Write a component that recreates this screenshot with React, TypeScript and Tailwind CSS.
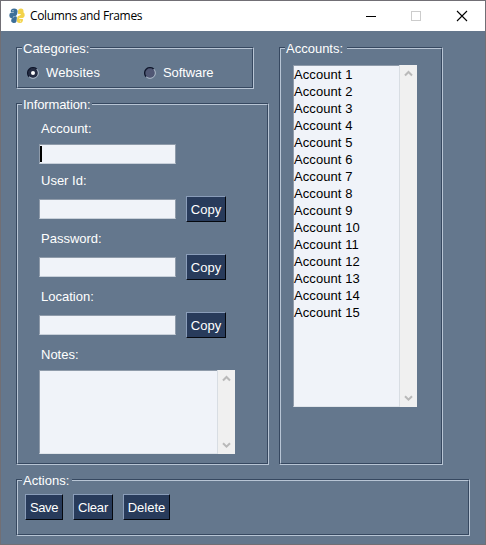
import React from 'react';

const accounts = Array.from({ length: 15 }, (_, i) => `Account ${i + 1}`);

function Frame({ title, className, titleClass, children }: { title: string; className: string; titleClass: string; children: React.ReactNode }) {
  return (
    <section className={`relative shrink-0 border border-t-[#364860] border-l-[#364860] border-r-[#b8c5d5] border-b-[#b8c5d5] ${className}`}>
      <div className="h-full w-full border border-t-[#b8c5d5] border-l-[#b8c5d5] border-r-[#364860] border-b-[#364860]">{children}</div>
      <h2 className={`absolute -top-[7px] left-[5px] h-4 whitespace-nowrap bg-[#64778d] pl-px leading-4 ${titleClass}`}>{title}</h2>
    </section>
  );
}

function Button({ children, className }: { children: string; className: string }) {
  return (
    <button className={`flex h-[26px] shrink-0 items-center justify-center border border-t-[#8a9db9] border-l-[#8a9db9] border-r-[#05080e] border-b-[#05080e] bg-[#283b5b] pt-px text-white ${className}`}>
      {children}
    </button>
  );
}

function Chevron({ down = false }: { down?: boolean }) {
  return (
    <svg width="9" height="7" viewBox="0 0 9 7" fill="none" stroke="#b9b9b9" strokeWidth="2">
      <path d={down ? 'M1 1.2L4.5 4.7L8 1.2' : 'M1 5.5L4.5 2L8 5.5'} />
    </svg>
  );
}

function Scrollbar() {
  return (
    <div className="flex w-[18px] shrink-0 flex-col items-center justify-between border-l border-[#d8dde3] bg-[#f0f0f0] pt-[5px] pb-[5px]">
      <Chevron />
      <Chevron down />
    </div>
  );
}

function Radio({ selected = false }: { selected?: boolean }) {
  return (
    <svg width="12" height="12" viewBox="0 0 12 12" fill="none">
      <circle cx="6" cy="6" r="5" fill={selected ? '#252c43' : '#505774'} />
      <path d="M2.2 9.8A5.3 5.3 0 0 1 9.8 2.2" stroke="#10172c" strokeWidth="1.4" />
      <path d="M2.2 9.8A5.3 5.3 0 0 0 9.8 2.2" stroke="#aebac9" strokeWidth="1" />
      {selected && <circle cx="6" cy="6" r="2" fill="#fff" />}
    </svg>
  );
}

function Field({ label, copy = false }: { label: string; copy?: boolean }) {
  return (
    <div className={copy ? 'h-[58px]' : 'h-[52px]'}>
      <div className="h-4 pl-0.5 leading-4">{label}</div>
      <div className={`mt-[7px] flex items-center gap-2.5 ${copy ? 'h-[26px]' : 'h-5'}`}>
        <div className="h-5 w-[137px] border border-[#8f9baa] border-b-[#c8d0da] bg-[#f0f3f9]">
          {!copy && <div className="h-4 w-0.5 translate-y-px bg-black" />}
        </div>
        {copy && <Button className="w-10">Copy</Button>}
      </div>
    </div>
  );
}

export default function App() {
  return (
    <div className="flex h-[545px] w-[486px] flex-col overflow-hidden border border-[#716f75] bg-[#64778d] font-['Liberation_Sans',Arial,sans-serif] text-[13px] text-white">
      <header className="flex h-[30px] shrink-0 items-center bg-white pl-2 text-black">
        <svg width="16" height="16" viewBox="0 0 16 16" className="shrink-0">
          <path fill="#3d6f98" d="M1.8 2.6Q2.3.5 5 .5Q8.6.6 8.6 3.4L8.1 6.3Q7.6 8.2 5.2 8.3Q3.8 8.5 3.7 10.3H2.2Q.2 9.6.3 7.2Q.3 5 2 4.8H4.8V4.3H1.8Z" />
          <path fill="#3d6f98" d="M4.3 9.4Q4.8 8.2 6.6 8.2Q8.1 8.1 7.9 9.8L7.5 13.4Q6.9 15.2 4.4 15Q1.8 14.6 2.2 12.1L2.8 10.6Z" />
          <path fill="#f3d34b" d="M9 2.9Q9.2.5 11.9.5Q14.6.6 14.5 3.3V4.6Q15.9 5.2 15.7 7.5Q15.4 9.8 13.6 10.1L10.2 10.3V11H13.9V12.8Q13.5 15.3 10.6 15.1Q7.6 15 7.9 12.1L8.4 9.1Q8.9 7.8 10.4 7.6Q11.9 7.4 11.8 6H9.1Z" />
          <circle cx="4" cy="2.7" r=".6" fill="#dce8f0" />
          <circle cx="11.5" cy="13.1" r=".6" fill="#fff8d0" />
        </svg>
        <h1 className="ml-[5px] whitespace-nowrap font-['Open_Sans','Noto_Sans',sans-serif] text-[12px] leading-4 tracking-[-0.34px]">Columns and Frames</h1>
        <svg className="ml-auto mr-[17px] shrink-0" width="102" height="12" viewBox="0 0 102 12" fill="none" shapeRendering="crispEdges">
          <path d="M0 6.5H10" stroke="#000" />
          <rect x="45.5" y="1.5" width="9" height="9" stroke="#cccccc" />
          <path d="M91 1L101 11M101 1L91 11" stroke="#000" strokeWidth="1.1" shapeRendering="auto" />
        </svg>
      </header>
      <main className="flex flex-1 flex-col gap-3.5 pt-4 pl-[15px]">
        <div className="flex h-[418px] gap-2.5">
          <div className="flex w-[253px] flex-col gap-3.5">
            <Frame title="Categories:" className="h-[42px] w-[238px]" titleClass="w-[68px]">
              <div className="flex h-full items-center pt-[9px] pl-[9px]">
                <label className="flex w-[117px] items-center gap-[7px]"><Radio selected /><span className="tracking-[0.1px]">Websites</span></label>
                <label className="flex items-center gap-[7px]"><Radio /><span className="tracking-[-0.1px]">Software</span></label>
              </div>
            </Frame>
            <Frame title="Information:" className="h-[362px] w-[253px]" titleClass="w-[70px] tracking-[-0.1px]">
              <div className="flex flex-col pt-4 pl-[21px]">
                <Field label="Account:" />
                <Field label="User Id:" copy />
                <Field label="Password:" copy />
                <Field label="Location:" copy />
                <div className="h-4 pl-0.5 leading-4">Notes:</div>
                <div className="mt-[7px] flex h-[84px] w-[196px]">
                  <div className="flex-1 border border-r-0 border-[#8f9baa] border-b-[#e0e5eb] bg-[#f0f3f9]" />
                  <Scrollbar />
                </div>
              </div>
            </Frame>
          </div>
          <Frame title="Accounts:" className="h-[418px] w-[164px]" titleClass="w-[62px]">
            <div className="pt-4 pl-3">
              <div className="flex h-[342px] w-[124px]">
                <ul className="flex-1 border border-r-0 border-[#8f9baa] border-b-[#e0e5eb] bg-[#f0f3f9] text-black">
                  {accounts.map((account) => <li className="h-[17px] leading-[17px] tracking-[0.08px]" key={account}>{account}</li>)}
                </ul>
                <Scrollbar />
              </div>
            </div>
          </Frame>
        </div>
        <Frame title="Actions:" className="h-[57px] w-[454px]" titleClass="w-[50px]">
          <div className="flex gap-2.5 pt-[13px] pl-[7px]">
            <Button className="w-[38px] tracking-[-0.4px]">Save</Button>
            <Button className="w-10 tracking-[-0.2px]">Clear</Button>
            <Button className="w-[47px]">Delete</Button>
          </div>
        </Frame>
      </main>
    </div>
  );
}
